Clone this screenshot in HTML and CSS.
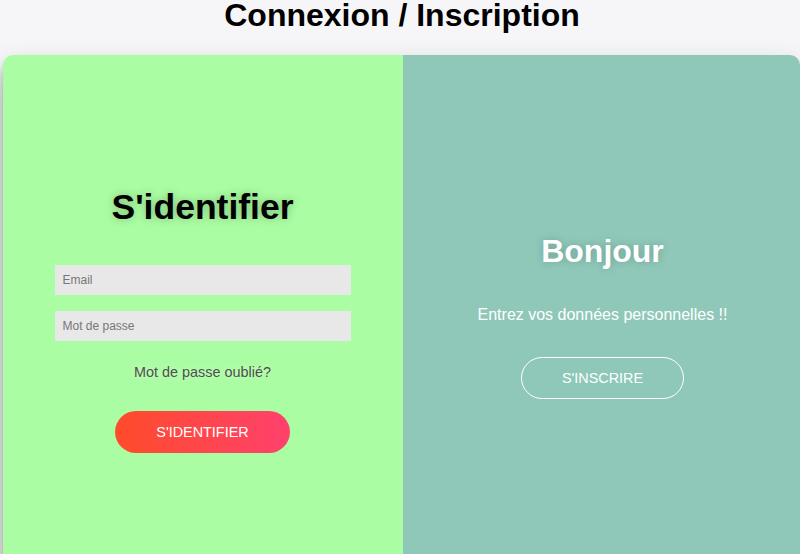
FILE: index.html
```html
<!DOCTYPE html>
<html lang="fr">
<head>
<meta charset="utf-8">
<title>Connexion / Inscription</title>
<link rel="stylesheet" href="styles.css">
</head>
<body>
<h1 class="page-title">Connexion / Inscription</h1>
<div class="container">
  <div class="panel panel-left">
    <h2 class="panel-title dark">S'identifier</h2>
    <input class="field" type="email" placeholder="Email">
    <input class="field" type="password" placeholder="Mot de passe">
    <a class="forgot" href="#">Mot de passe oublié?</a>
    <button class="btn btn-solid">S'IDENTIFIER</button>
  </div>
  <div class="panel panel-right">
    <h2 class="panel-title light">Bonjour</h2>
    <p class="lead">Entrez vos données personnelles !!</p>
    <button class="btn btn-ghost">S'INSCRIRE</button>
  </div>
</div>
</body>
</html>
```
FILE: styles.css
```css
* { box-sizing: border-box; }
html, body { margin: 0; padding: 0; }
body {
  background: #f6f6f8;
  font-family: "Liberation Sans", Arial, sans-serif;
  width: 800px;
  height: 554px;
  overflow: hidden;
}
.page-title {
  margin: 0;
  height: 55px;
  font-size: 32px;
  font-weight: bold;
  text-align: center;
  color: #000;
  line-height: 31px;
  padding-left: 4px;
  white-space: nowrap;
}
.container {
  margin-left: 3px;
  width: 797px;
  height: 510px;
  display: flex;
  border-radius: 10px;
  overflow: hidden;
  box-shadow: 0 14px 28px rgba(0,0,0,0.25), 0 10px 10px rgba(0,0,0,0.22);
}
.panel {
  display: flex;
  flex-direction: column;
  align-items: center;
  justify-content: flex-start;
}
.panel-left {
  width: 400px;
  background: #aafda2;
  padding-top: 132px;
  padding-right: 1px;
}
.panel-right {
  width: 397px;
  background: #8fc8b9;
  padding-top: 178px;
  padding-left: 2px;
}
.panel-title {
  margin: 0;
  font-weight: bold;
}
.panel-title.dark {
  font-size: 35.5px;
  line-height: 40px;
  color: #000;
  text-shadow: 0 0 8px rgba(0,0,0,0.25);
  margin-bottom: 38px;
}
.panel-title.light {
  font-size: 32px;
  line-height: 36px;
  color: #fff;
  text-shadow: 0 0 8px rgba(0,0,0,0.2);
  margin-bottom: 37px;
}
.field {
  width: 296px;
  height: 30px;
  border: none;
  background: #e8e8e8;
  padding: 0 8px;
  font-family: "Liberation Sans", Arial, sans-serif;
  font-size: 12px;
  color: #333;
  margin: 0 0 16px 0;
  outline: none;
}
.field::placeholder { color: #777; }
.field + .field { margin-bottom: 23px; }
.forgot {
  font-size: 14.4px;
  line-height: 16px;
  color: #4f4f4f;
  text-decoration: none;
  text-shadow: 0 0 6px rgba(255,255,255,0.5);
  margin-bottom: 31px;
}
.btn {
  font-family: "Liberation Sans", Arial, sans-serif;
  font-size: 14.4px;
  color: #fff;
  text-transform: uppercase;
  cursor: pointer;
  padding: 0;
}
.btn-solid {
  width: 175px;
  height: 42px;
  border: none;
  border-radius: 21px;
  background: linear-gradient(to right, #ff4b2b, #ff416c);
}
.btn-ghost {
  width: 163px;
  height: 42px;
  border: 1px solid #fff;
  border-radius: 21px;
  background: transparent;
}
.lead {
  margin: 0 0 33px 0;
  font-size: 16px;
  line-height: 18px;
  color: #fff;
}
```
